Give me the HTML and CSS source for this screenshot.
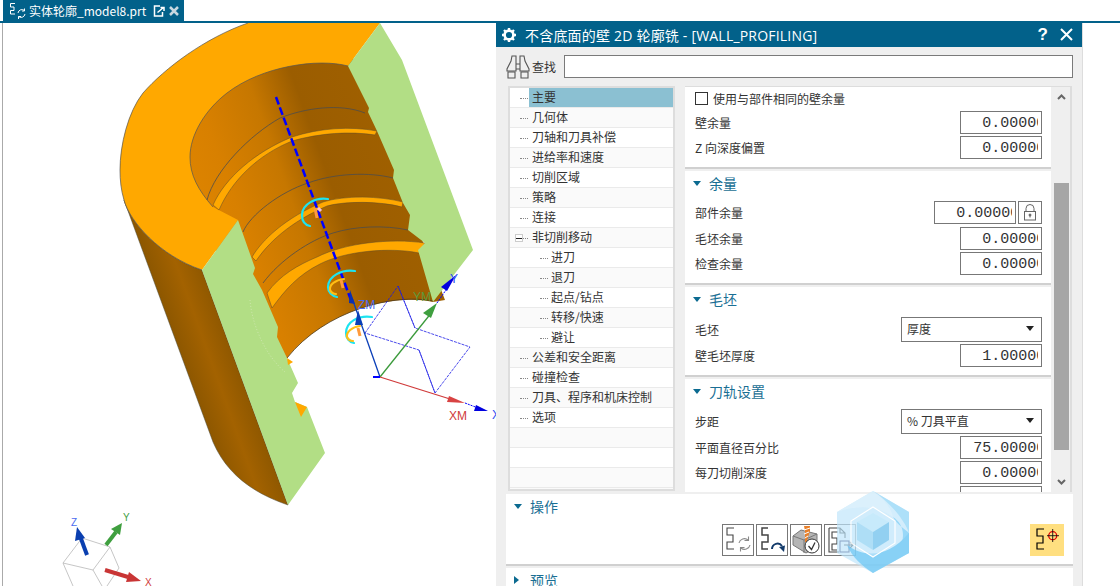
FILE: index.html
```html
<!DOCTYPE html>
<html lang="zh-CN">
<head>
    <meta charset="UTF-8">
    <title>实体轮廓_model8.prt</title>
    <link rel="stylesheet" href="styles.css">
</head>
<body>
    <div class="tabbar">
        <div class="tab">
            <svg class="tab-icon" width="17" height="17" viewBox="0 0 17 17" fill="none" stroke="#fff" stroke-width="1">
                <path d="M6 1.500H1.500V5H5V8.500H1.500V12H6"/>
                <path d="M9 11a4 4 0 0 1 6.500-2.500M16 12a4 4 0 0 1-6.500 2.500"/>
                <path d="M15.500 6.500v2.500h-2.500M9.500 17v-2.500h2.500"/>
            </svg>
            <span class="tab-title">实体轮廓_model8.prt</span>
            <svg class="tab-pin" width="12" height="12" viewBox="0 0 12 12" fill="none" stroke="#fff" stroke-width="1.500">
                <path d="M7 1H1.500V11H9.500V7"/><path d="M4.500 7.500L10.500 2.500M7.500 2.500h3.500v3.500"/>
            </svg>
            <svg width="10" height="10" viewBox="0 0 10 10" stroke="#c8d8e0" stroke-width="2.500"><path d="M1 1l8 8M9 1l-8 8"/></svg>
        </div>
    </div>

    <div class="workspace">
        <div class="viewport">
            <svg width="493" height="563" viewBox="3 23 493 563">
                <defs>
                    <linearGradient id="wall" gradientUnits="userSpaceOnUse" x1="130" y1="0" x2="369" y2="-86">
                        <stop offset="0" stop-color="#dc8300"/>
                        <stop offset="0.12" stop-color="#d88000"/>
                        <stop offset="0.33" stop-color="#c67700"/>
                        <stop offset="0.5" stop-color="#9b5d00"/>
                        <stop offset="0.8" stop-color="#a06000"/>
                        <stop offset="1" stop-color="#a96500"/>
                    </linearGradient>
                    <linearGradient id="side" gradientUnits="userSpaceOnUse" x1="50" y1="0" x2="100" y2="-18">
                        <stop offset="0" stop-color="#8b5600"/>
                        <stop offset="0.55" stop-color="#a36200"/>
                        <stop offset="1" stop-color="#8f5800"/>
                    </linearGradient>
                </defs>

                <!-- outer side of the part -->
                <path d="M124 200C130 222 160 256 202 270L288 505C250 492 226 472 213 442Z" fill="url(#side)" stroke="#4a4a3a" stroke-width="0.500"/>

                <!-- inner wall, runs under the top and end faces -->
                <path d="M185 157L200 50L352 55L445 300L433 302C395 293 325 310 287 358L270 358L205 230Z" fill="url(#wall)"/>
                <path d="M433 301C395 293 325 310 287 358" fill="none" stroke="#4d3a1a" stroke-width="0.800"/>

                <!-- top face -->
                <path d="M248 23H380L348 66C318 58 262 66 227 93C205 110 190 135 190 157C190 175 198 190 213 207L238 220L202 270C160 256 130 222 124 200C121 190 120 180 120 170C120 145 128 112 143 93C165 68 205 38 248 23Z" fill="#ffa800"/>
                <path d="M248 23C205 38 165 68 143 93C128 112 120 145 120 170C120 180 121 190 124 200C130 222 160 256 202 270" fill="none" stroke="#555" stroke-width="0.700"/>
                <path d="M348 66C318 58 262 66 227 93C205 110 190 135 190 157C190 175 198 190 213 207" fill="none" stroke="#555" stroke-width="0.700"/>

                <!-- grooves -->
                <g fill="#ffa800" stroke="#5c4a2a" stroke-width="0.500">
                    <path d="M213 205C225 178 255 152 292 137C320 128 350 126 377 131L375 135C350 131 320 133 292 141C258 155 232 180 219 210Z"/>
                    <path d="M252 257C262 240 285 218 323 202C345 195 380 196 403 202L402 207C380 201 345 201 327 206C290 222 268 243 256 261Z"/>
                    <path d="M267 293C280 275 298 265 317 257C345 243 390 238 425 243L419 253C390 247 345 251 320 264C298 275 285 290 272 308Z"/>
                </g>
                <g fill="none" stroke="#4d4d4d" stroke-width="0.800">
                    <path d="M207 200C215 170 250 135 280 118C305 108 340 103 365 113"/>
                    <path d="M243 232C250 215 280 192 308 183C335 173 370 172 393 178"/>
                    <path d="M263 283C280 260 310 240 333 233C355 226 385 225 408 230"/>
                </g>

                <!-- end faces -->
                <path d="M380 23L402 60L473 250L433 302L418 250L425 243L408 230L410 215L403 203L393 178L394 170L377 131L368 112L369 108L348 66Z" fill="#b2de85"/>
                <path d="M238 220L255 268L253 274L262 290L278 327L277 337L287 358L298 383L292 393L295 402L307 407L325 453L288 505L202 270Z" fill="#b2de85"/>
                <path d="M287 358L293 362L288 365ZM295 402L307 407L301 417Z" fill="#ffa800"/>
                <path d="M250 300C252 325 265 355 285 372" fill="none" stroke="#d8eabf" stroke-width="0.700" stroke-dasharray="1 2"/>

                <!-- csys planes -->
                <path d="M365 333L398 286L415 328L470 347L435 393L419 350ZM398 286L415 328M419 350L435 393" fill="none" stroke="#1a1ae6" stroke-width="0.800" stroke-dasharray="3 1"/>

                <!-- tool axis -->
                <path d="M276 97L352 303" stroke="#0000ff" stroke-width="2.500" stroke-dasharray="8 3"/>

                <!-- cutter arcs -->
                <g fill="none" stroke-width="2.200" stroke-linecap="round">
                    <path d="M328 199C316 197 302 204 302 215C302 221 305 225 310 226" stroke="#1de4f0"/>
                    <path d="M355 271C342 269 328 276 328 287C328 292 332 296 337 297" stroke="#1de4f0"/>
                    <path d="M344 279C335 280 329 285 330 290C331 292 333 294 336 294" stroke="#ffbe14"/>
                    <path d="M372 317C358 315 346 322 346 333C346 338 349 342 354 343" stroke="#1de4f0"/>
                    <path d="M360 326C352 327 346 332 347 337C348 339 350 341 353 341" stroke="#ffbe14"/>
                </g>
                <path d="M315 208l2 10M341 280l2 8M358 328l2 8" stroke="#ff9b3c" stroke-width="3"/>
                <path d="M318 208l3 3" stroke="#f0c0e0" stroke-width="3"/>

                <!-- work csys -->
                <g fill="none">
                    <path d="M380 377L352 298" stroke="#0b3fb8" stroke-width="1.300"/>
                    <path d="M380 377L432 312" stroke="#3a9a3a" stroke-width="1.300"/>
                    <path d="M380 377L450 399" stroke="#d03a3a" stroke-width="1.300"/>
                    <path d="M437 303L448 287M465 403L478 408" stroke="#0000ff" stroke-dasharray="2 1"/>
                    <path d="M373 377h7" stroke="#0000ff" stroke-width="2"/>
                </g>
                <path d="M350 290L355 304L349 303Z" fill="#0a2fb0"/>
                <path d="M358 310L363 325L355 325Z" fill="#0a3fb8"/>
                <path d="M437 303L431 318L423 313Z" fill="#3f9f3f"/>
                <path d="M465 403L447 402L449 396Z" fill="#d84343"/>
                <path d="M456 275L447 291L441 287Z" fill="#0000e0"/>
                <path d="M488 411L476 405L474 411Z" fill="#0000e0"/>
                <text class="axis-label" x="358" y="309" fill="#4a6cf0">ZM</text>
                <text class="axis-label" x="413" y="301" fill="#5c9a3c">YM</text>
                <text class="axis-label" x="449" y="420" fill="#d03a3a">XM</text>
                <text class="axis-label" x="450" y="283" fill="#2a4af0">Y</text>
                <text class="axis-label" x="492" y="419" fill="#2a4af0">X</text>

                <!-- absolute csys -->
                <path d="M110 547L93 570L63 563L82 538ZM110 547L119 568L107 586M93 570L102 586M63 563L73 586" fill="none" stroke="#b8b8b8" stroke-width="0.800"/>
                <path d="M87 555L80 536" stroke="#0a3fb0" stroke-width="4"/>
                <path d="M77 527L85 538L75 541Z" fill="#0a3fb0"/>
                <path d="M106 545L116 532" stroke="#3f9f3f" stroke-width="4"/>
                <path d="M122 523L120 535L111 529Z" fill="#3f9f3f"/>
                <path d="M105 570L128 577" stroke="#c93535" stroke-width="4"/>
                <path d="M141 581L126 582L129 572Z" fill="#c93535"/>
                <text class="axis-small" x="71" y="526" fill="#4a6cf0">Z</text>
                <text class="axis-small" x="123" y="521" fill="#3f9f3f">Y</text>
                <text class="axis-small" x="145" y="586" fill="#d03a3a">X</text>
            </svg>
        </div>

        <div class="dialog">
            <div class="dialog-title">
                <svg class="gear" width="16" height="16" viewBox="0 0 16 16">
                    <circle cx="8" cy="8" r="4.400" fill="none" stroke="#fff" stroke-width="2.600"/>
                    <path d="M8 1v3M8 12v3M1 8h3M12 8h3M3 3l2 2M11 11l2 2M13 3l-2 2M5 11l-2 2" stroke="#fff" stroke-width="2.400"/>
                </svg>
                <span class="dialog-name">不含底面的壁 2D 轮廓铣 - [WALL_PROFILING]</span>
                <span class="help">?</span>
                <svg width="13" height="13" viewBox="0 0 13 13" stroke="#fff" stroke-width="2"><path d="M1 1l11 11M12 1L1 12"/></svg>
            </div>

            <div class="search">
                <svg width="24" height="24" viewBox="0 0 24 24" fill="none" stroke="#555" stroke-width="1.100">
                    <path d="M6 1h4v7v8H1v-2L5 6zM14 8V1h4l1 5l4 8v2h-9z"/>
                    <path d="M2 17h7v6H2zM15 17h7v6h-7zM10 9h4M10 14h4"/>
                </svg>
                <span class="search-label">查找</span>
                <div class="search-input"></div>
            </div>

            <div class="content">
                <div class="tree">
                    <span class="spine"></span>
                    <span class="spine spine-child"></span>
                    <div class="tree-row selected"><span class="tree-label">主要</span></div>
                    <div class="tree-row"><span class="tree-label">几何体</span></div>
                    <div class="tree-row"><span class="tree-label">刀轴和刀具补偿</span></div>
                    <div class="tree-row"><span class="tree-label">进给率和速度</span></div>
                    <div class="tree-row"><span class="tree-label">切削区域</span></div>
                    <div class="tree-row"><span class="tree-label">策略</span></div>
                    <div class="tree-row"><span class="tree-label">连接</span></div>
                    <div class="tree-row"><span class="minus"></span><span class="tree-label">非切削移动</span></div>
                    <div class="tree-row child"><span class="tree-label">进刀</span></div>
                    <div class="tree-row child"><span class="tree-label">退刀</span></div>
                    <div class="tree-row child"><span class="tree-label">起点/钻点</span></div>
                    <div class="tree-row child"><span class="tree-label">转移/快速</span></div>
                    <div class="tree-row child"><span class="tree-label">避让</span></div>
                    <div class="tree-row"><span class="tree-label">公差和安全距离</span></div>
                    <div class="tree-row"><span class="tree-label">碰撞检查</span></div>
                    <div class="tree-row"><span class="tree-label">刀具、程序和机床控制</span></div>
                    <div class="tree-row"><span class="tree-label">选项</span></div>
                    <div class="tree-row empty"></div>
                    <div class="tree-row empty"></div>
                    <div class="tree-row empty"></div>
                </div>

                <div class="panel">
                    <div class="sections">
                        <div class="section">
                            <div class="check-row"><span class="checkbox"></span>使用与部件相同的壁余量</div>
                            <div class="row"><span>壁余量</span><div class="num"><span>0.00000</span></div></div>
                            <div class="row"><span>Z 向深度偏置</span><div class="num"><span>0.00000</span></div></div>
                        </div>
                        <div class="section">
                            <div class="section-head"><span class="arrow"></span>余量</div>
                            <div class="row row-loose">
                                <span>部件余量</span>
                                <div class="row-end">
                                    <div class="num"><span>0.00000</span></div>
                                    <div class="lock">
                                        <svg width="14" height="17" viewBox="0 0 14 17" fill="none" stroke="#666">
                                            <path d="M3 8V4.500a4 4 0 0 1 8 0V8"/>
                                            <rect x="1.500" y="7.500" width="11" height="8.500"/>
                                            <circle cx="7" cy="11" r="1" fill="#666"/><path d="M7 11.500v2"/>
                                        </svg>
                                    </div>
                                </div>
                            </div>
                            <div class="row"><span>毛坯余量</span><div class="num"><span>0.00000</span></div></div>
                            <div class="row"><span>检查余量</span><div class="num"><span>0.00000</span></div></div>
                        </div>
                        <div class="section">
                            <div class="section-head"><span class="arrow"></span>毛坯</div>
                            <div class="row"><span>毛坯</span><div class="select"><span>厚度</span><i class="caret"></i></div></div>
                            <div class="row"><span>壁毛坯厚度</span><div class="num"><span>1.00000</span></div></div>
                        </div>
                        <div class="section">
                            <div class="section-head"><span class="arrow"></span>刀轨设置</div>
                            <div class="row"><span>步距</span><div class="select"><span>% 刀具平直</span><i class="caret"></i></div></div>
                            <div class="row"><span>平面直径百分比</span><div class="num"><span class="wide">75.00000</span></div></div>
                            <div class="row"><span>每刀切削深度</span><div class="num"><span>0.00000</span></div></div>
                            <div class="row"><span></span><div class="num"></div></div>
                        </div>
                    </div>
                    <div class="scrollbar">
                        <svg class="chevron" width="9" height="6" viewBox="0 0 9 6" fill="none" stroke="#666" stroke-width="2"><path d="M1 5l3.500-3.500L8 5"/></svg>
                        <div class="thumb"></div>
                        <svg class="chevron" width="9" height="6" viewBox="0 0 9 6" fill="none" stroke="#666" stroke-width="2"><path d="M1 1l3.500 3.500L8 1"/></svg>
                    </div>
                </div>
            </div>

            <div class="group">
                <div class="group-head"><span class="arrow"></span>操作</div>
                <div class="actions">
                    <div class="action-list">
                        <div class="action">
                            <svg width="30" height="30" viewBox="0 0 30 30" fill="none" stroke="#444" stroke-width="1.100">
                                <path d="M11 3H4V10H10V17H4V24H11"/>
                                <path stroke="#888" d="M16 18a5.500 5.500 0 0 1 9-3M27 20a5.500 5.500 0 0 1-9 3"/>
                                <path stroke="#888" d="M25.500 11.500v4h-4M17.500 26.500v-4h4"/>
                            </svg>
                        </div>
                        <div class="action">
                            <svg width="30" height="30" viewBox="0 0 30 30" fill="none" stroke="#444" stroke-width="1.500">
                                <path d="M11 3H5V10H11V17H5V24H11"/>
                                <path stroke="#123a6a" stroke-width="2" d="M15 24a5.500 5.500 0 0 1 10-3"/>
                                <path fill="#123a6a" stroke="none" d="M22 22l6-1.500L27 27z"/>
                            </svg>
                        </div>
                        <div class="action">
                            <svg width="30" height="30" viewBox="0 0 30 30">
                                <path d="M2 11L10 5L26 9V22L15 28L2 20Z" fill="#b5b5b5" stroke="#777"/>
                                <path d="M2 11L13 15V28M13 15L26 9" fill="none" stroke="#777"/>
                                <path d="M13 1H19V6L17 12L16 17H14V6Z" fill="#e8802a"/>
                                <path d="M13 5L19 3M13 9L18 7M14 13L17 11" stroke="#fff"/>
                                <circle cx="21" cy="21" r="7" fill="#fff" stroke="#333"/>
                                <path d="M17.500 21l3 3.500l3.500-7" fill="none" stroke="#333" stroke-width="1.300"/>
                            </svg>
                        </div>
                        <div class="action">
                            <svg width="30" height="30" viewBox="0 0 30 30" fill="none" stroke="#444" stroke-width="1.100">
                                <path d="M4 3H15L20 8V13M15 3V8H20M4 3V27H14"/>
                                <path d="M13 7H7V13H12V19H7V25H12"/>
                                <rect x="15" y="16" width="9" height="11" stroke="#336"/>
                                <path d="M19 20H28M25 17L28 20L25 23"/>
                            </svg>
                        </div>
                    </div>
                    <div class="action-target">
                        <svg width="28" height="28" viewBox="0 0 28 28" fill="none" stroke="#000" stroke-width="1.200">
                            <path d="M11 3H4V10H10V17H4V23H11"/>
                            <circle cx="19.700" cy="9.700" r="4" stroke="#e00000" stroke-width="1.300"/>
                            <path d="M14 9.700H26M19.700 3V16" stroke="#111" stroke-width="0.900"/>
                        </svg>
                    </div>
                </div>
            </div>

            <div class="group group-closed">
                <div class="group-head"><span class="arrow-right"></span>预览</div>
            </div>

            <svg class="watermark" width="72" height="82" viewBox="0 0 72 82">
                <path d="M36 0L72 21V62L36 82L0 62V21Z" fill="#bfe6fb" opacity="0.750"/>
                <path d="M0 21L36 0C48 9 54 17 56 26C40 14 20 14 0 21Z" fill="#d8f0fc" opacity="0.900"/>
                <path d="M36 0L72 21V42C68 30 54 12 36 0Z" fill="#a5ddf9"/>
                <path d="M72 21V62L48 70C60 62 66 54 66 44C66 36 62 30 56 26C60 34 68 38 72 42Z" fill="#8ed4f8"/>
                <path d="M72 42V62L36 82C24 74 15 66 10 54C26 66 50 68 72 42Z" fill="#7ccdf6"/>
                <path d="M36 16L58 30V52L36 66L14 52V30Z" fill="#c8eafc" fill-opacity="0.500" stroke="#fff" stroke-width="1.200"/>
                <path d="M36 22L52 31L36 41L20 31Z" fill="#c2e8fb"/>
                <path d="M20 31L36 41V59L20 49Z" fill="#a6dbf6"/>
                <path d="M52 31L36 41V59L52 49Z" fill="#87ccf0"/>
            </svg>
        </div>
    </div>
</body>
</html>
```

FILE: styles.css
```css
* {
    box-sizing: border-box;
}
html, body {
    margin: 0;
    height: 586px;
    overflow: hidden;
    background: #fff;
}
body {
    font-family: "Noto Sans CJK SC", "Noto Sans", sans-serif;
    font-size: 12px;
    color: #333;
    display: flex;
    flex-direction: column;
}

/* tab strip */
.tabbar {
    height: 23px;
    padding-left: 3px;
    border-bottom: 2px solid #02618a;
    flex: none;
}
.tab {
    width: 181px;
    height: 21px;
    background: #02618a;
    color: #fff;
    display: flex;
    align-items: center;
    padding-left: 6px;
}
.tab-icon {
    flex: none;
    margin-right: 3px;
}
.tab-title {
    width: 124px;
    font-size: 12px;
    white-space: nowrap;
}
.tab-pin {
    margin-right: 4px;
}

.workspace {
    flex: 1;
    display: flex;
    min-height: 0;
}

/* graphics window */
.viewport {
    width: 496px;
    margin-left: 2px;
    margin-right: -2px;
    border-left: 1px solid #aaa;
    overflow: hidden;
    flex: none;
}
.viewport svg {
    display: block;
}
.axis-label {
    font-family: "Liberation Sans", sans-serif;
    font-size: 12px;
}
.axis-small {
    font-family: "Liberation Sans", sans-serif;
    font-size: 10px;
}

/* dialog */
.dialog {
    position: relative;
    width: 587px;
    background: #efefef;
    border-right: 1px solid #ddd;
    overflow: hidden;
    flex: none;
}
.dialog-title {
    height: 24px;
    background: #02618a;
    color: #fff;
    display: flex;
    align-items: center;
    padding: 0 9px 1px 5px;
}
.gear {
    flex: none;
    margin-right: 8px;
}
.dialog-name {
    flex: 1;
    font-family: "Open Sans", "Noto Sans CJK SC", sans-serif;
    font-size: 14px;
    letter-spacing: 0.200px;
    white-space: nowrap;
}
.help {
    font-family: "Liberation Sans", sans-serif;
    font-size: 17px;
    font-weight: bold;
    margin-right: 12px;
}

.search {
    height: 39px;
    display: flex;
    align-items: center;
    padding: 0 9px 0 10px;
}
.search-label {
    margin: 0 8px 0 2px;
}
.search-input {
    flex: 1;
    height: 23px;
    background: #fff;
    border: 1px solid #7a7a7a;
}

.content {
    display: flex;
    height: 408px;
    padding-left: 12px;
}

/* tree */
.tree {
    position: relative;
    width: 167px;
    height: 405px;
    border: 2px solid #ddd;
    background: #fafafa;
    overflow: hidden;
    flex: none;
}
.spine {
    position: absolute;
    left: 9px;
    top: 10px;
    height: 320px;
    border-left: 1px dotted #888;
}
.spine-child {
    left: 29px;
    top: 160px;
    height: 90px;
}
.tree-row {
    position: relative;
    height: 20px;
    display: flex;
    padding-left: 19px;
    border-bottom: 1px solid #eaeaea;
    background: #fff;
    color: #333;
    line-height: 17px;
}
.tree-row:nth-child(even) {
    background: #fafafa;
}
.tree-row::before {
    content: "";
    position: absolute;
    left: 10px;
    top: 10px;
    width: 8px;
    border-top: 1px dotted #888;
}
.tree-row.child {
    padding-left: 38px;
}
.tree-row.child::before {
    left: 30px;
}
.tree-row.empty::before {
    display: none;
}
.tree-label {
    flex: 1;
    padding-left: 3px;
}
.tree-row.selected {
    background: #fff;
    border-bottom-color: #eaeaea;
}
.selected .tree-label {
    background: #8bc0d2;
}
.minus {
    position: absolute;
    left: 5px;
    top: 6px;
    width: 8px;
    height: 8px;
    background: #fff;
    border: 1px solid #ccc;
    z-index: 1;
    display: flex;
    align-items: center;
    justify-content: center;
}
.minus::after {
    content: "";
    width: 6px;
    height: 1px;
    flex: none;
    background: #222;
}

/* options panel */
.panel {
    display: flex;
    width: 387px;
    height: 406px;
    margin-left: 10px;
    border-top: 1px solid #ddd;
    border-right: 2px solid #ddd;
    overflow: hidden;
    flex: none;
}
.sections {
    width: 366px;
    flex: none;
    overflow: hidden;
}
.section {
    background: #fff;
    padding: 0 9px 8px 10px;
    margin-bottom: 2px;
    border-bottom: 2px solid #d0d0d0;
}
.check-row {
    height: 24px;
    display: flex;
    align-items: center;
    padding-bottom: 2px;
}
.checkbox {
    width: 13px;
    height: 13px;
    border: 1px solid #333;
    margin-right: 5px;
}
.section-head {
    height: 30px;
    display: flex;
    align-items: center;
    font-size: 14px;
    color: #1a6f94;
    padding-bottom: 6px;
}
.arrow {
    width: 0;
    height: 0;
    border-left: 4.500px solid transparent;
    border-right: 4.500px solid transparent;
    border-top: 5px solid #0b6a90;
    margin: 0 8px 0 -2px;
}
.row {
    display: flex;
    justify-content: space-between;
    align-items: center;
    margin-bottom: 2px;
}
.row:last-child {
    margin-bottom: 0;
}
.row-loose {
    margin-bottom: 3px;
}
.row-end {
    display: flex;
    gap: 2px;
}
.num {
    width: 82px;
    height: 23px;
    background: #fff;
    border: 1px solid #777;
    display: flex;
    align-items: center;
    justify-content: flex-end;
    padding: 2px 3px 0 0;
    font-family: "Liberation Mono", monospace;
    font-size: 15px;
    color: #333;
}
.num span {
    display: block;
    width: 6.200ch;
    overflow: hidden;
    white-space: nowrap;
}
.num span.wide {
    width: 7.200ch;
}
.lock {
    width: 24px;
    height: 23px;
    border: 1px solid #777;
    display: flex;
    align-items: center;
    justify-content: center;
}
.select {
    width: 141px;
    height: 25px;
    border: 1px solid #777;
    display: flex;
    align-items: center;
    justify-content: space-between;
    padding: 0 5px 2px;
}
.caret {
    width: 0;
    height: 0;
    border-left: 4px solid transparent;
    border-right: 4px solid transparent;
    border-top: 5px solid #222;
    margin-right: 2px;
}

.scrollbar {
    width: 17px;
    height: 405px;
    margin-left: 2px;
    background: #efefef;
    display: flex;
    flex-direction: column;
    align-items: center;
    padding-top: 7px;
}
.thumb {
    width: 15px;
    height: 267px;
    background: #a6a6a6;
    margin: 83px 0 29px;
    flex: none;
}
.chevron {
    flex: none;
}

/* bottom groups */
.group {
    width: 567px;
    margin-left: 10px;
    background: #fff;
    border-bottom: 2px solid #d0d0d0;
    margin-bottom: 2px;
    height: 72px;
    padding: 0 9px 0 8px;
}
.group-head {
    height: 30px;
    display: flex;
    align-items: center;
    font-size: 14px;
    color: #1a6f94;
    padding-bottom: 6px;
}
.group-head .arrow {
    margin: 0 8px 0 0;
}
.arrow-right {
    width: 0;
    height: 0;
    border-top: 4.500px solid transparent;
    border-bottom: 4.500px solid transparent;
    border-left: 5px solid #0b6a90;
    margin: 0 11px 0 0;
}
.group-closed {
    border-bottom: 0;
}
.actions {
    display: flex;
    justify-content: space-between;
    padding-left: 208px;
}
.action-list {
    display: flex;
    gap: 2px;
}
.action {
    width: 32px;
    height: 32px;
    border: 1px solid #777;
}
.action svg,
.action-target svg {
    display: block;
}
.action-target {
    width: 34px;
    height: 32px;
    background: #ffdf80;
    display: flex;
    align-items: center;
    justify-content: center;
}

.watermark {
    position: absolute;
    left: 341px;
    top: 468px;
    opacity: 0.900;
}
```
